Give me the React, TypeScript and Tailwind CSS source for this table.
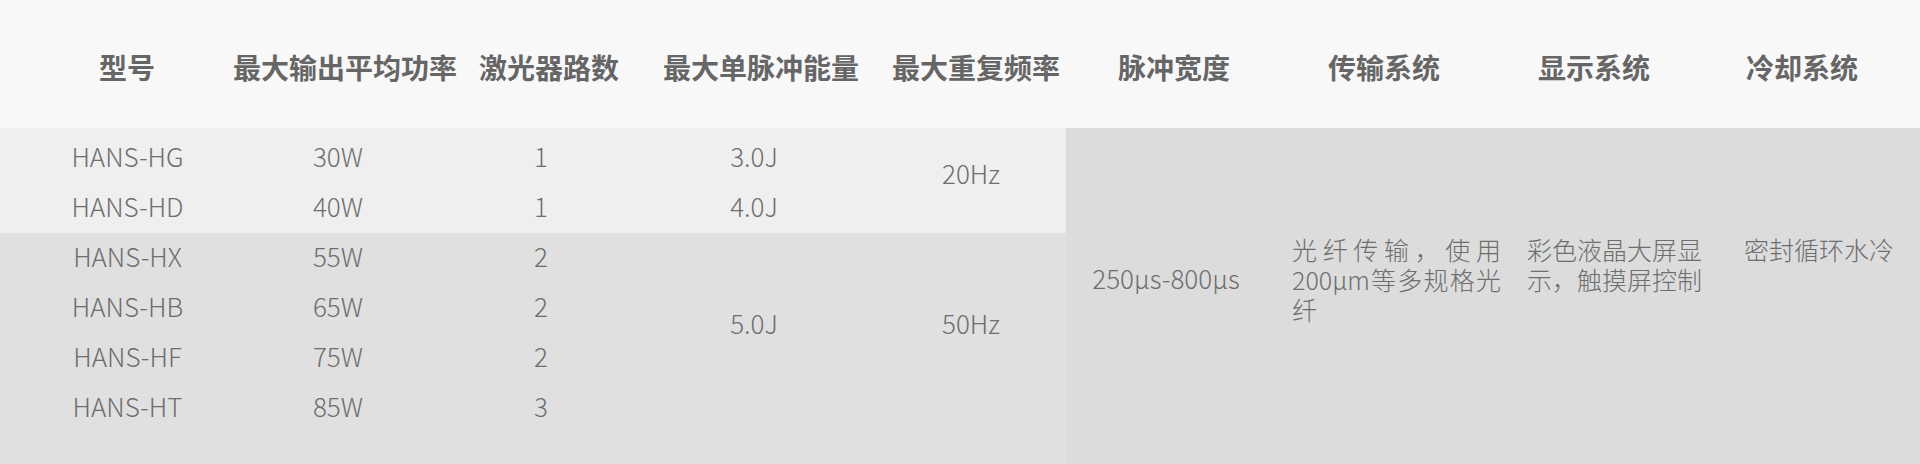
const rows1 = [
  { model: 'HANS-HG', power: '30W', ch: '1', energy: '3.0J' },
  { model: 'HANS-HD', power: '40W', ch: '1', energy: '4.0J' },
]

const rows2 = [
  { model: 'HANS-HX', power: '55W', ch: '2' },
  { model: 'HANS-HB', power: '65W', ch: '2' },
  { model: 'HANS-HF', power: '75W', ch: '2' },
  { model: 'HANS-HT', power: '85W', ch: '3' },
]

function Cell({ children, className = '' }: { children: React.ReactNode; className?: string }) {
  return <div className={'flex items-center justify-center whitespace-nowrap ' + className}>{children}</div>
}

function Head({ children, className = '' }: { children: React.ReactNode; className?: string }) {
  return <div className={'flex justify-center whitespace-nowrap ' + className}>{children}</div>
}

export default function App() {
  return (
    <div className="w-[1920px] h-[464px] overflow-hidden bg-[#dcdcdc] font-['Noto_Sans_CJK_SC',sans-serif]">
      {/* header */}
      <div className="flex h-[128px] items-center pt-[5px] bg-[#f8f8f8] text-[28px] font-bold text-[#666666] leading-none">
        <Head className="w-[254px]">型号</Head>
        <Head className="w-[182px]">最大输出平均功率</Head>
        <Head className="w-[226px]">激光器路数</Head>
        <Head className="w-[198px]">最大单脉冲能量</Head>
        <Head className="w-[232px]">最大重复频率</Head>
        <Head className="w-[164px]">脉冲宽度</Head>
        <Head className="w-[256px]">传输系统</Head>
        <Head className="w-[164px]">显示系统</Head>
        <Head className="w-[244px] pl-[8px]">冷却系统</Head>
      </div>

      {/* body */}
      <div className="flex">
        <div className="w-[1066px] text-[26px] font-light text-[#6e6e6e] leading-none">
          <div className="grid grid-cols-[255px_166px_240px_186px_219px] grid-rows-[50px_50px] bg-[#efefef] pt-[5px]">
            {rows1.map((r, i) => (
              <>
                <Cell key={'m' + i} className="pb-[5px]">{r.model}</Cell>
                <Cell key={'p' + i} className="pb-[5px]">{r.power}</Cell>
                <Cell key={'c' + i} className="pb-[5px]">{r.ch}</Cell>
                <Cell key={'e' + i} className="pb-[5px]">{r.energy}</Cell>
                {i === 0 && (
                  <Cell key="f" className="row-span-2 pl-[29px] pb-[20px]">20Hz</Cell>
                )}
              </>
            ))}
          </div>
          <div className="grid grid-cols-[255px_166px_240px_186px_219px] grid-rows-[50px_50px_50px_50px] bg-[#e0e0e0] pb-[40px]">
            {rows2.map((r, i) => (
              <>
                <Cell key={'m' + i} className="pb-[5px]">{r.model}</Cell>
                <Cell key={'p' + i} className="pb-[5px]">{r.power}</Cell>
                <Cell key={'c' + i} className="pb-[5px]">{r.ch}</Cell>
                {i === 0 && (
                  <>
                    <Cell key="e" className="row-span-4 pb-[20px]">5.0J</Cell>
                    <Cell key="f" className="row-span-4 pl-[29px] pb-[20px]">50Hz</Cell>
                  </>
                )}
              </>
            ))}
          </div>
        </div>

        <div className="flex flex-1 h-[336px] bg-[#dcdcdc] font-light text-[#6e6e6e]">
          <div className="flex h-[305px] w-[214px] items-center justify-center pr-[14px] pb-[5px] text-[26px] leading-none">
            250μs-800μs
          </div>
          <div className="w-[247px] pl-[12px] pt-[106px] text-[25px] leading-[30px]">
            <p className="w-[209px] text-justify">光纤传输，使用200μm等多规格光纤</p>
          </div>
          <div className="w-[217px] pt-[106px] text-[25px] leading-[30px]">
            <p className="w-[180px]">彩色液晶大屏显示，触摸屏控制</p>
          </div>
          <div className="flex-1 pt-[106px] text-[25px] leading-[30px]">
            <p>密封循环水冷</p>
          </div>
        </div>
      </div>
    </div>
  )
}
